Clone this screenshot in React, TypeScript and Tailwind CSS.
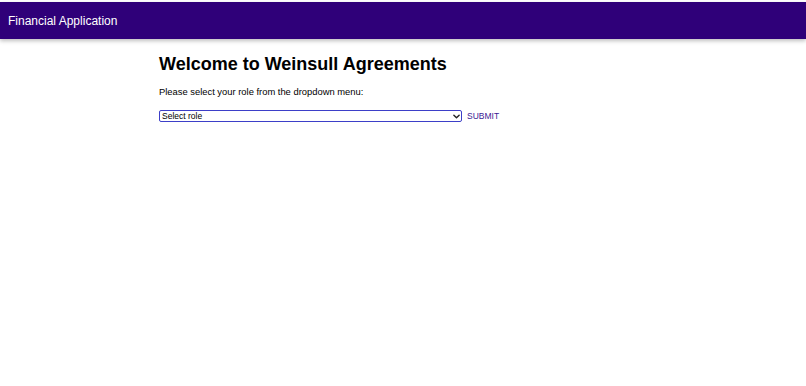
export default function App() {
  return (
    <div className="min-h-screen bg-white font-['Liberation_Sans',Arial,sans-serif] text-black">
      {/* Top bar */}
      <header className="mt-[2px] h-[37px] bg-[#2f0079] flex items-center px-2 shadow-[0_2px_4px_rgba(0,0,0,0.25)]">
        <span className="text-[12px] text-white">Financial Application</span>
      </header>

      {/* Body */}
      <main className="pl-[159px] pt-[14px]">
        <h1 className="text-[18px] font-bold leading-[22px]">
          Welcome to Weinsull Agreements
        </h1>
        <p className="mt-[11px] text-[9.4px] leading-[12px]">
          Please select your role from the dropdown menu:
        </p>
        <div className="mt-[12px] flex items-center gap-[5px]">
          <div className="w-[303px] h-[12px] flex items-center justify-between border border-[#3d3fc8] rounded-[2px] pl-[2px] pr-[1px]">
            <span className="text-[8.5px] leading-[10px]">Select role</span>
            <svg width="7" height="5" viewBox="0 0 8 5" fill="none" stroke="#222" strokeWidth="1.6" strokeLinecap="round" strokeLinejoin="round">
              <polyline points="1 1 4 4 7 1" />
            </svg>
          </div>
          <button className="text-[8.5px] text-[#3b1a94] leading-[12px]">SUBMIT</button>
        </div>
      </main>
    </div>
  )
}
